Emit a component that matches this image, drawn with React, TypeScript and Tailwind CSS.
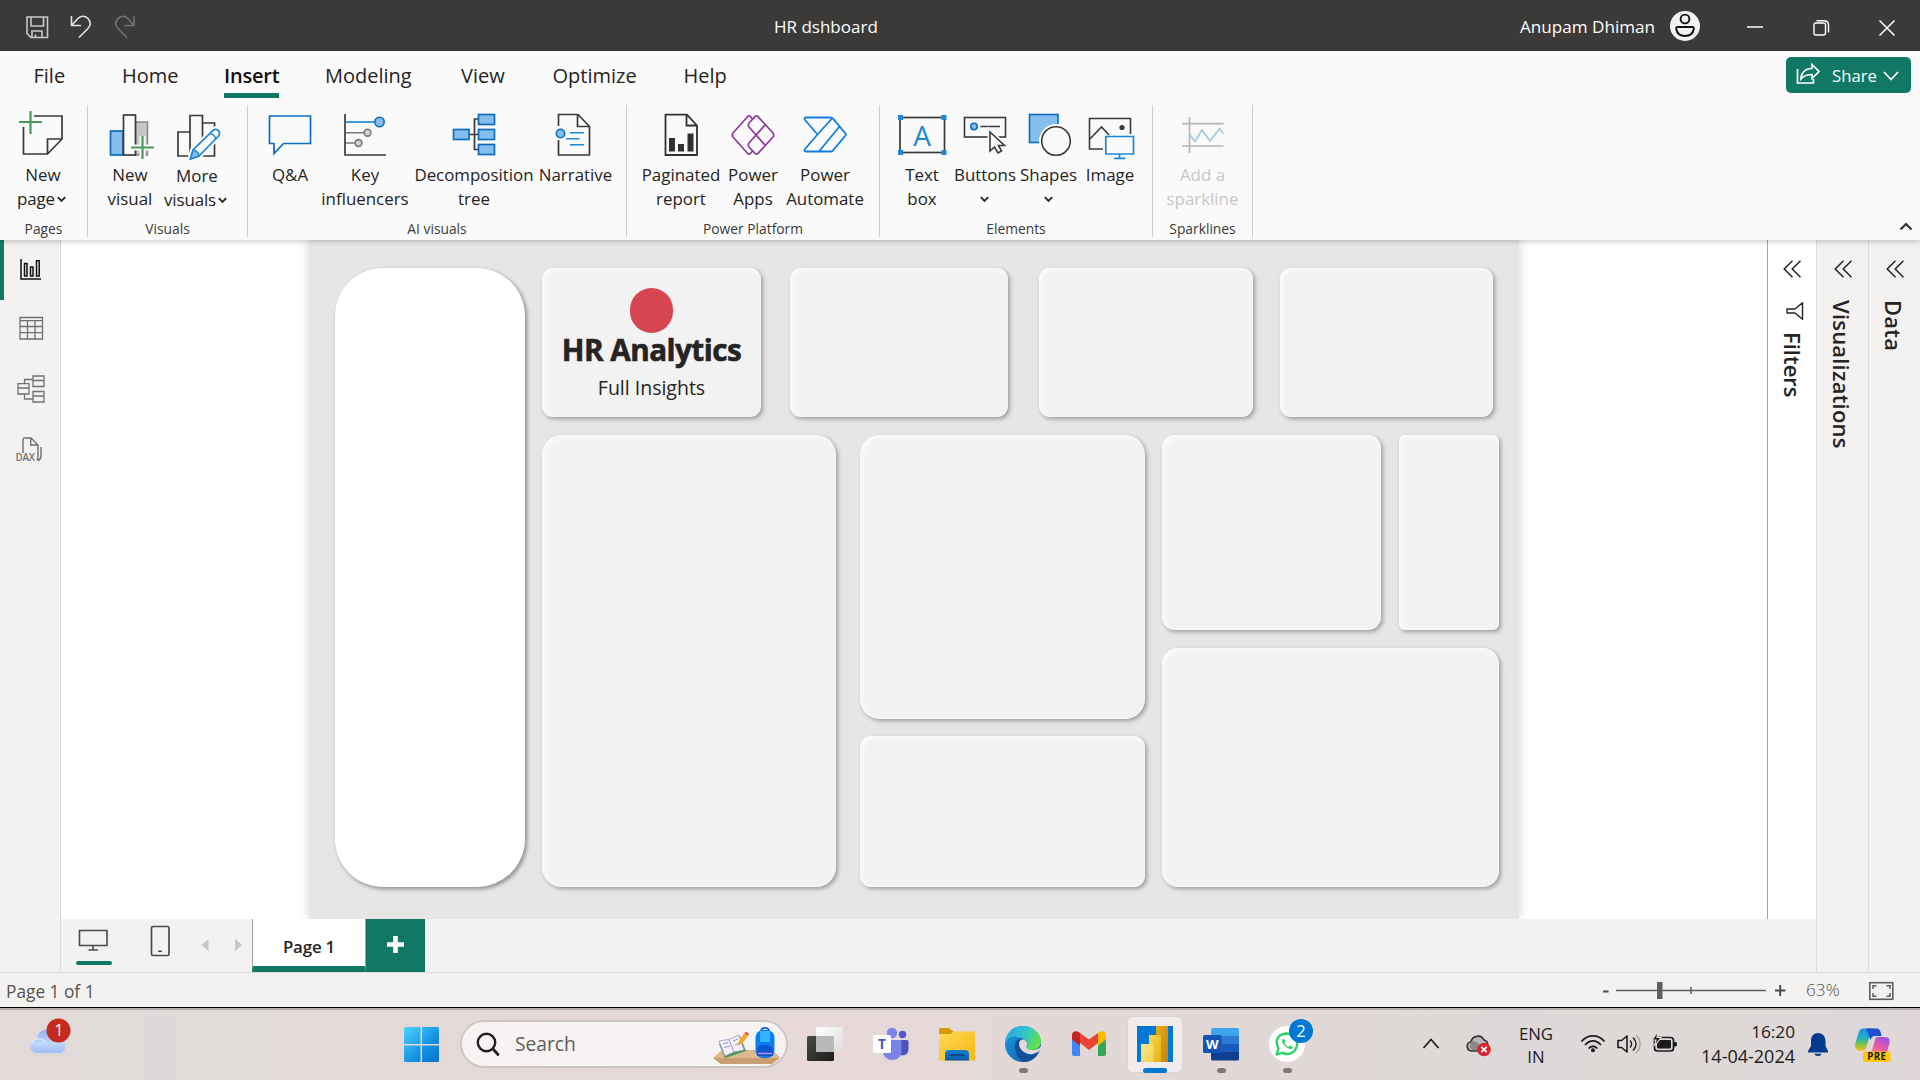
import React from "react";

type Kids = { children?: React.ReactNode };

/* Vector drawing whose coordinates share the window's coordinate space. */
function Ico({ x, y, w, h, className = "", children }: Kids & { x: number; y: number; w: number; h: number; className?: string }) {
  return (
    <svg width={w} height={h} viewBox={`${x} ${y} ${w} ${h}`} fill="none" className={"shrink-0 " + className}>
      {children}
    </svg>
  );
}

const INK = "#3b3a39";
const BLUE = "#1b87d6";
const FILL = "#83beec";

function Chevron({ className = "" }: { className?: string }) {
  return (
    <svg width="9" height="7" viewBox="0 0 9 7" fill="none" className={"inline-block " + className}>
      <path d="M.8 1.2 4.5 5 8.2 1.2" stroke="#252423" strokeWidth="1.8" />
    </svg>
  );
}

/* ---------- title bar ---------- */
function TitleBar() {
  return (
    <header className="flex h-[51px] shrink-0 items-start bg-[#3b3a38] text-white">
      <Ico x={0} y={0} w={160} h={51}>
        <path d="M27 17H47.500V37.500H31L27 33.500Z M31 17V26H43.500V17 M32 37.500V31H42V37.500 M35.500 37V34.500" stroke="#c9c9c7" strokeWidth="1.6" />
        <path d="M71.500 16V25.500H81 M72 25L78 18.500C81 15.600 85 15.800 88 18.500C91 22 90.800 25.500 88 28.500L79 37.500" stroke="#e4e4e2" strokeWidth="1.6" />
        <path d="M134 16V25.500H124.500 M133.500 25L128 18.500C125 15.600 121 15.800 118 18.500C115 22 115.200 25.500 118 28.500L127 37.500" stroke="#74736f" strokeWidth="1.6" />
      </Ico>
      <div className="ml-[614px] w-[110px] pt-[15px] text-[17px] leading-6">HR dshboard</div>
      <div className="ml-[636px] w-[150px] pt-[15px] text-[17.100px] leading-6 whitespace-nowrap">Anupam Dhiman</div>
      <Ico x={1670} y={0} w={250} h={51}>
        <circle cx="1685" cy="26" r="15" fill="#f3f2f1" />
        <circle cx="1685" cy="19" r="4.400" stroke="#111" strokeWidth="1.900" />
        <path d="M1677.500 27H1692.500Q1694 27 1693.800 29C1693 33.500 1689.500 36 1685 36S1677 33.500 1676.200 29Q1676 27 1677.500 27Z" stroke="#111" strokeWidth="1.900" />
        <path d="M1747 27H1763" stroke="#fff" strokeWidth="1.500" />
        <rect x="1814" y="23" width="11.500" height="12" rx="2" stroke="#fff" strokeWidth="1.400" />
        <path d="M1816.500 20.700H1824C1827 20.700 1828.500 22.500 1828.500 25V32.500" stroke="#fff" strokeWidth="1.400" />
        <path d="M1879.500 20.500 1894.500 35.500M1894.500 20.500 1879.500 35.500" stroke="#fff" strokeWidth="1.500" />
      </Ico>
    </header>
  );
}

/* ---------- ribbon ---------- */
function Tabs() {
  const t = "shrink-0 pt-[11px] leading-[28px]";
  return (
    <div className="flex h-[54px] pl-[33.500px] text-[20px] text-[#252423]">
      <div className={t + " w-[88.500px]"}>File</div>
      <div className={t + " w-[102px]"}>Home</div>
      <div className="w-[101px] shrink-0">
        <div className="h-[47px] w-[55px] border-b-[5px] border-[#117865] pt-[11px] text-center leading-[28px] font-semibold tracking-[-0.200px] text-[#11100f]">Insert</div>
      </div>
      <div className={t + " w-[136px]"}>Modeling</div>
      <div className={t + " w-[91.500px]"}>View</div>
      <div className={t + " w-[131px]"}>Optimize</div>
      <div className={t}>Help</div>
      <div className="mt-[6px] mr-[9px] ml-auto flex h-[36px] w-[125px] rounded-[5px] bg-[#117865] text-white">
        <Ico x={1786} y={57} w={46} h={36}>
          <path d="M1797.500 69V83H1813.500V79" stroke="#fff" strokeWidth="1.700" />
          <path d="M1801 79C1801 73 1805 68.500 1812 68.500V64.500L1819 71.500L1812 78.500V74.500C1807 74.500 1803.500 76 1801 79Z" stroke="#fff" strokeWidth="1.700" />
        </Ico>
        <span className="w-[51px] pt-[7px] text-[16.7px] leading-6">Share</span>
        <Ico x={1883} y={57} w={16} h={36}>
          <path d="M1884 72 1891 79.500 1898 72" stroke="#fff" strokeWidth="1.700" />
        </Ico>
      </div>
    </div>
  );
}

function Item({ cx, width, label, sub, drop, dim, down, children }: Kids & { cx: number; width: string; label: string; sub?: string; drop?: boolean; dim?: boolean; down?: boolean }) {
  return (
    <div className={"flex shrink-0 flex-col items-center pt-[3px] " + width}>
      <Ico x={cx - 30} y={108} w={60} h={54}>{children}</Ico>
      <div className={"text-center text-[16.9px] leading-6 whitespace-nowrap " + (dim ? "text-[#c8c6c4] " : "text-[#252423] ") + (down ? "pt-[2px]" : "pt-px")}>
        {label}
        <div className={sub && drop ? "-ml-[3px] tracking-[-0.100px]" : ""}>
          {sub}
          {drop && <Chevron className={sub ? "ml-[2px] align-[2px]" : "align-[2px]"} />}
        </div>
      </div>
    </div>
  );
}

function Group({ name, width, children }: Kids & { name: string; width: string }) {
  return (
    <section className={"flex h-[132px] shrink-0 flex-col border-r border-[#d0cecc] " + width}>
      <div className="flex h-[115px] shrink-0">{children}</div>
      <div className="shrink-0 text-center text-[13.8px] leading-[18px] text-[#3b3a39]">{name}</div>
    </section>
  );
}

function Ribbon() {
  return (
    <div className="relative z-10 h-[189px] shrink-0 bg-[#fafafa] shadow-[0_1px_6px_rgba(0,0,0,0.25)]">
      <Tabs />
      <div className="flex h-[135px]">
        <Group name="Pages" width="w-[88px]">
          <Item cx={43} width="w-[86px]" label="New" sub="page" drop>
            <path d="M34 116H62V139L47.500 154H23.500V127M47.500 154V139H62" stroke={INK} strokeWidth="1.700" />
            <path d="M19 122H42M30.500 111V134" stroke="#459b57" strokeWidth="2.200" />
          </Item>
        </Group>
        <Group name="Visuals" width="w-[160px]">
          <div className="w-[12px]" />
          <Item cx={130} width="w-[60px]" label="New" sub="visual">
            <rect x="135.500" y="122" width="12" height="33" fill="#c8c6c4" stroke="#8a8886" strokeWidth="1.500" />
            <rect x="110.500" y="131" width="12.500" height="24" fill={FILL} stroke="#0f6cbd" strokeWidth="1.700" />
            <rect x="123.500" y="115" width="12" height="40" fill="#fafafa" stroke={INK} strokeWidth="1.700" />
            <path d="M130 147.500H155M142.500 136V160" stroke="#fafafa" strokeWidth="6" />
            <path d="M131 147.500H154M142.500 136V159" stroke="#459b57" strokeWidth="2.200" />
          </Item>
          <Item cx={197} width="w-[74px]" label="More" sub="visuals" drop down>
            <path d="M178 132H190V156H178ZM190 156V115.500H202.500V156ZM202.500 123H214.500V156H202.500" stroke={INK} strokeWidth="1.700" />
            <path d="M190.500 159 193 150 213 130.500C217 127.500 221.500 132 218.500 136L199 156Z" fill="#fafafa" stroke="#fafafa" strokeWidth="6" />
            <path d="M190.500 159 193 150 213 130.500C217 127.500 221.500 132 218.500 136L199 156Z" fill="#fafafa" stroke={BLUE} strokeWidth="1.700" />
            <path d="M190.500 159 193 150C196 150.500 198.500 152.500 199 156Z" fill={FILL} stroke={BLUE} strokeWidth="1.500" />
            <path d="M210 133.500C213 134 215 136 215.500 139" stroke={BLUE} strokeWidth="1.500" />
          </Item>
        </Group>
        <Group name="AI visuals" width="w-[379px]">
          <div className="w-[14px]" />
          <Item cx={290} width="w-[56px]" label="Q&A">
            <path d="M269.500 116H310.500V143.500H283.500L274 153.500V143.500H269.500Z" stroke="#0f6cbd" strokeWidth="1.700" />
          </Item>
          <Item cx={365} width="w-[94px]" label="Key" sub="influencers">
            <path d="M345 114V155H386" stroke={INK} strokeWidth="1.700" />
            <path d="M346 122H374" stroke={BLUE} strokeWidth="1.700" />
            <circle cx="379.500" cy="122" r="4.700" fill={FILL} stroke="#0f6cbd" strokeWidth="1.600" />
            <path d="M346 132.700H364M346 143H355" stroke="#797775" strokeWidth="1.600" />
            <circle cx="367.500" cy="132.700" r="3.400" fill="#d2d0ce" stroke="#797775" strokeWidth="1.600" />
            <circle cx="358.500" cy="143" r="3.400" fill="#d2d0ce" stroke="#797775" strokeWidth="1.600" />
          </Item>
          <Item cx={474} width="w-[124px]" label="Decomposition" sub="tree">
            <path d="M479 119H474.500V149.500H479M469 134.500H479" stroke={INK} strokeWidth="1.700" />
            <g fill={FILL} stroke="#0f6cbd" strokeWidth="1.700">
              <rect x="453.500" y="129.500" width="15.500" height="10" />
              <rect x="478.500" y="114.500" width="16" height="10" />
              <rect x="478.500" y="129.500" width="16" height="10" />
              <rect x="478.500" y="144.500" width="16" height="10" />
            </g>
          </Item>
          <Item cx={576} width="w-[79px]" label="Narrative">
            <path d="M558.500 126V114.500H578L589.500 126.500V155H558.500V140M577.500 115V126.500H589" stroke={INK} strokeWidth="1.700" />
            <circle cx="560.500" cy="133.500" r="4.200" fill={FILL} stroke="#0f6cbd" strokeWidth="1.600" />
            <path d="M570 132.700H584M566 138.700H579.500M570 144.700H584" stroke={BLUE} strokeWidth="1.500" />
          </Item>
        </Group>
        <Group name="Power Platform" width="w-[253px]">
          <div className="w-[14px]" />
          <Item cx={681} width="w-[80px]" label="Paginated" sub="report">
            <path d="M665.500 114.700H687L697 125.500V155H665.500ZM686.500 115V125.500H697" stroke="#323130" strokeWidth="1.800" />
            <path d="M669 138H675V151.500H669ZM678 144H684V151.500H678ZM687.500 133.500H693.500V151.500H687.500Z" fill="#323130" />
          </Item>
          <Item cx={753} width="w-[64px]" label="Power" sub="Apps">
            <g stroke="#8f3a9c" strokeWidth="1.700" strokeLinejoin="round">
              <path d="M753 119.500 750.500 116.700Q749 115.200 747.500 116.700L733 133Q731.500 135 733 137L747.500 153.300Q749 154.800 750.500 153.300L753 150.500" />
              <path d="M755 116.700Q756.500 115.200 758 116.700L773 133Q774.500 135 773 137L758 153.300Q756.500 154.800 755 153.300L749 147Q747.500 145 749 143L765 125M755 116.700L749 123Q747.500 125 749 127L765 145" />
            </g>
          </Item>
          <Item cx={825} width="w-[80px]" label="Power" sub="Automate">
            <path d="M806 117.500H830.500Q832 117.500 833 118.700L845.500 133.500Q846.200 134.500 845.500 135.500L833 150.300Q832 151.500 830.500 151.500H806Q803.500 151 805 149L817.500 134.500L805 120Q803.500 118 806 117.500ZM832 118.500 817.500 134.500M839.500 126.500 819 151.500" stroke="#0f7fe0" strokeWidth="1.800" strokeLinejoin="round" />
          </Item>
        </Group>
        <Group name="Elements" width="w-[273px]">
          <div className="w-[12px]" />
          <Item cx={922} width="w-[60px]" label="Text" sub="box">
            <rect x="900" y="117.500" width="44.500" height="35" stroke={INK} strokeWidth="1.700" />
            <path d="M898 115H903V120H898ZM941.500 115H946.500V120H941.500ZM898 150H903V155H898ZM941.500 150H946.500V155H941.500Z" fill={BLUE} />
            <text x="922" y="145.500" textAnchor="middle" fontSize="28" fill={BLUE} fontFamily="Open Sans" fontWeight="400">A</text>
          </Item>
          <Item cx={985} width="w-[66px]" label="Buttons" drop>
            <rect x="964.500" y="117.500" width="41" height="19.500" stroke={INK} strokeWidth="1.600" />
            <circle cx="974" cy="126.500" r="3.200" fill={FILL} stroke="#0f6cbd" strokeWidth="1.600" />
            <path d="M980.500 126.500H1000" stroke={INK} strokeWidth="1.500" />
            <path d="M990 132V151L994.500 147L998 153L1001.500 151L998.500 145.500H1004.500Z" fill="#fafafa" stroke="#fafafa" strokeWidth="5" />
            <path d="M990 132V151L994.500 147L998 153L1001.500 151L998.500 145.500H1004.500Z" fill="#fafafa" stroke={INK} strokeWidth="1.600" />
          </Item>
          <Item cx={1048} width="w-[61px]" label="Shapes" drop>
            <rect x="1028.500" y="114.500" width="28.500" height="28" fill={FILL} stroke="#0f6cbd" strokeWidth="1.600" />
            <circle cx="1055" cy="141" r="17" fill="#fafafa" />
            <circle cx="1055" cy="141" r="14.300" fill="#fafafa" stroke={INK} strokeWidth="1.600" />
          </Item>
          <Item cx={1110} width="w-[62px]" label="Image">
            <path d="M1103 149H1089.500V118.500H1130.500V134M1090 139 1101.500 127 1109 135" stroke={INK} strokeWidth="1.600" />
            <circle cx="1122" cy="127.500" r="2.600" fill={INK} />
            <path d="M1105.800 136.500H1133.500V154H1105.800ZM1119.500 154V158M1114 158.300H1125.500" stroke={BLUE} strokeWidth="1.700" />
          </Item>
        </Group>
        <Group name="Sparklines" width="w-[100px]">
          <Item cx={1202} width="w-[99px]" label="Add a" sub="sparkline" dim>
            <path d="M1188.500 117V153M1181 123.700H1222.500M1181 146H1222.500" stroke="#b7b5b3" strokeWidth="1.700" />
            <path d="M1189 135 1194 141.500 1201 130 1209 141 1218.500 128.700 1222.500 134" stroke="#a5cbe4" strokeWidth="1.700" />
          </Item>
        </Group>
        <Ico x={1899} y={105} w={14} h={130} className="mr-[7px] ml-auto">
          <path d="M1900.500 229.500 1906 224 1911.500 229.500" stroke="#323130" strokeWidth="2.200" />
        </Ico>
      </div>
    </div>
  );
}

/* ---------- left rail ---------- */
function Rail() {
  return (
    <nav className="flex w-[61px] shrink-0 flex-col border-r border-[#dddbd9] bg-[#f3f2f1]">
      <div className="h-[60px] border-l-4 border-[#117865]">
        <Ico x={4} y={240} w={56} h={60}>
          <path d="M21 259V279H41M24.500 263.500H27V276H24.500ZM30.500 267H33V276H30.500ZM36.500 260.700H39.200V276H36.500Z" stroke="#111" strokeWidth="1.500" />
        </Ico>
      </div>
      <Ico x={0} y={300} w={60} h={60}>
        <path d="M20 317.500H42.500V339H20ZM20 320.700H42.500M20 326.500H42.500M20 332.700H42.500M27.500 321V339M35 321V339" stroke="#72706e" strokeWidth="1.300" />
      </Ico>
      <Ico x={0} y={360} w={60} h={60}>
        <path d="M18 383.700H29V394H18ZM18 388H29M33 376H44V386.500H33ZM33 380.500H44M33 391.500H44V402H33ZM33 396H44M24.500 383V379.500H33M24.500 394V399H33" stroke="#72706e" strokeWidth="1.300" />
      </Ico>
      <Ico x={0} y={420} w={60} h={60}>
        <path d="M23 453V439.500Q23 438 24.500 438H31L38 445V456Q38 459 37 460M30.700 438V445H38M41 447V456Q41 459.500 38 460.500" stroke="#72706e" strokeWidth="1.400" />
        <text x="15.500" y="460.700" fontSize="9.800" fontWeight="600" fill="#72706e" fontFamily="Open Sans" letterSpacing="-0.200">DAX</text>
      </Ico>
    </nav>
  );
}

/* ---------- report canvas ---------- */
const CARD = "shrink-0 bg-[#f2f2f2] shadow-[2px_2px_4px_rgba(0,0,0,0.32),inset_2px_2px_6px_rgba(255,255,255,0.85)] ";

function Canvas() {
  return (
    <main className="flex min-w-0 flex-1 overflow-hidden bg-white pl-[248px]">
      <div className="flex w-[1210px] shrink-0 gap-[17px] bg-[#e6e6e6] pt-[28px] pl-[26px] shadow-[0_0_10px_rgba(0,0,0,0.16)]">
        <div className="h-[619px] w-[190px] shrink-0 rounded-[48px] bg-white shadow-[2px_2px_4px_rgba(0,0,0,0.4)]" />
        <div className="flex flex-col gap-[18px]">
          <div className="flex h-[149px]">
            <div className={CARD + "flex w-[219px] flex-col items-center rounded-[11px] pt-[20px]"}>
              <div className="h-[45px] w-[43px] rounded-full bg-[#d64550]" />
              <div className="text-[29.700px] leading-[34px] font-bold tracking-[-0.550px] whitespace-nowrap text-[#252423] [-webkit-text-stroke:0.600px_#252423]">HR Analytics</div>
              <div className="pt-[4px] text-[19.500px] leading-[34px] text-[#252423]">Full Insights</div>
            </div>
            <div className={CARD + "ml-[29px] w-[218px] rounded-[11px]"} />
            <div className={CARD + "ml-[31px] w-[214px] rounded-[11px]"} />
            <div className={CARD + "ml-[27px] w-[213px] rounded-[11px]"} />
          </div>
          <div className="flex h-[452px]">
            <div className={CARD + "w-[294px] rounded-[20px]"} />
            <div className="ml-[24px] flex w-[285px] flex-col gap-[17px]">
              <div className={CARD + "h-[284px] rounded-[20px]"} />
              <div className={CARD + "h-[151px] rounded-[11px]"} />
            </div>
            <div className="ml-[17px] flex w-[337px] flex-col gap-[18px]">
              <div className="flex h-[195px] justify-between">
                <div className={CARD + "w-[219px] rounded-[13px]"} />
                <div className={CARD + "w-[100px] rounded-[6px]"} />
              </div>
              <div className={CARD + "h-[239px] rounded-[16px]"} />
            </div>
          </div>
        </div>
      </div>
    </main>
  );
}

/* ---------- collapsed panes ---------- */
function Pane({ name, className, icon }: { name: string; className: string; icon?: boolean }) {
  return (
    <div className={"flex shrink-0 flex-col " + className}>
      <svg width="18" height="18" viewBox="0 0 18 18" fill="none" className="mt-[20px] shrink-0">
        <path d="M9.500.7 1.200 9 9.500 17.300M17.500.7 9.200 9 17.500 17.300" stroke="#252423" strokeWidth="1.500" />
      </svg>
      {icon && (
        <svg width="18" height="18" viewBox="0 0 18 18" fill="none" className="mt-[24px] ml-[3px] shrink-0">
          <path d="M16.500.8V17.200L9 11H1V7H9Z" stroke="#252423" strokeWidth="1.400" strokeLinejoin="round" />
        </svg>
      )}
      <div className={"w-[22px] text-[22px] leading-[22px] font-semibold whitespace-nowrap text-[#252423] [writing-mode:vertical-rl] " + (icon ? "-ml-px mt-[12px]" : "-ml-[3px] mt-[22px] tracking-[0.200px]")}>{name}</div>
    </div>
  );
}

/* ---------- page tabs and status ---------- */
function PageTabs() {
  return (
    <div className="flex h-[53px] shrink-0 bg-[#f3f2f1]">
      <Ico x={61} y={919} w={191} h={53}>
        <path d="M79.500 930.500H107V945.500H79.500ZM93 946V949.500M88.500 950H98" stroke="#4b4a48" strokeWidth="1.600" />
        <rect x="76" y="961" width="36" height="4" rx="2" fill="#117865" />
        <rect x="151.500" y="926.500" width="17.500" height="29" rx="1.500" stroke="#4b4a48" strokeWidth="1.700" />
        <path d="M158 951.300H162" stroke="#4b4a48" strokeWidth="1.500" />
        <path d="M208.500 939V951L201.500 945ZM235 939V951L242 945Z" fill="#c8c6c4" />
      </Ico>
      <div className="w-[114px] border-r border-b-[6px] border-l border-[#a19f9d] border-b-[#117865] bg-white pt-[16px] text-center text-[16.900px] leading-6 font-semibold tracking-[-0.200px] text-[#252423]">Page 1</div>
      <div className="flex w-[59px] items-center justify-center bg-[#117865]">
        <svg width="17" height="17" viewBox="0 0 17 17" className="-mt-[3px]"><path d="M0 8.500H17M8.500 0V17" stroke="#fff" strokeWidth="4.600" /></svg>
      </div>
    </div>
  );
}

function Status() {
  return (
    <div className="flex h-[36px] shrink-0 border-t border-b border-t-[#dddbd9] border-b-black bg-[#f3f2f1] text-[#55534f]">
      <div className="pt-[7px] pl-[6px] text-[17.300px] leading-6">Page 1 of 1</div>
      <Ico x={1595} y={973} w={211} h={34} className="ml-auto">
        <path d="M1603 991.500H1608.500M1775 990.500H1785.500M1780.200 985V996" stroke="#4b4a48" strokeWidth="1.900" />
        <path d="M1616 990.500H1766M1691 987V994" stroke="#605e5c" strokeWidth="1.500" />
        <rect x="1657" y="982" width="5.500" height="17" fill="#605e5c" />
      </Ico>
      <div className="w-[59px] pt-[5px] text-[17.300px] leading-6 font-light">63%</div>
      <Ico x={1865} y={973} w={55} h={34}>
        <rect x="1869.800" y="982.700" width="23" height="16.600" stroke="#605e5c" strokeWidth="1.600" />
        <path d="M1876.500 985.800H1873V989M1873 993V996.300H1876.500M1886.500 985.800H1890V989M1890 993V996.300H1886.500" stroke="#605e5c" strokeWidth="1.500" />
      </Ico>
    </div>
  );
}

/* ---------- taskbar ---------- */
function TaskIcon({ x, children, className = "" }: Kids & { x: number; className?: string }) {
  return <Ico x={x} y={1010} w={66} h={70} className={className}>{children}</Ico>;
}

function Taskbar() {
  return (
    <footer className="flex h-[72px] shrink-0 border-t-2 border-[#b5adac] bg-[linear-gradient(90deg,#e2d9d8_0%,#dfdad9_8%,#e3d9d7_25%,#e6d8d6_45%,#e2d8d6_60%,#ded9d8_78%,#e0d8d8_100%)] text-[#1b1b1b]">
      <Ico x={0} y={1010} w={460} h={70}>
        <defs>
          <linearGradient id="cloud" x1="0" y1="0" x2="0" y2="1"><stop stopColor="#8fb2f5" /><stop offset="0.600" stopColor="#bfd6fb" /><stop offset="1" stopColor="#9dbcf6" /></linearGradient>
          <linearGradient id="win" x1="0" y1="0" x2="1" y2="1"><stop stopColor="#4fd4fb" /><stop offset="0.600" stopColor="#1490e2" /><stop offset="1" stopColor="#0673cf" /></linearGradient>
        </defs>
        <path d="M37 1053C28 1053 28 1040 37 1039.500C37 1027 56 1026 58 1038C68 1037 69 1053 58 1053Z" fill="url(#cloud)" />
        <path d="M31.500 1043C35 1037 43 1038 46 1043" stroke="#e5effe" strokeWidth="1.500" opacity="0.700" />
        <circle cx="58.500" cy="1030.500" r="12" fill="#c42b1c" />
        <text x="59" y="1036.300" textAnchor="middle" fontSize="16.500" fill="#fff" fontFamily="Open Sans">1</text>
        <path d="M405.500 1027H420.500V1044H404V1028.500Q404 1027 405.500 1027ZM422 1027H437.500Q439 1027 439 1028.500V1044H422ZM404 1045.500H420.500V1062H405.500Q404 1062 404 1060.500ZM422 1045.500H439V1060.500Q439 1062 437.500 1062H422Z" fill="url(#win)" />
      </Ico>
      <div className="mt-[10px] flex h-[48px] w-[328px] shrink-0 rounded-full border-2 border-[#cfc5c4] bg-[#f7f3f2]">
        <Ico x={462} y={1022} w={53} h={44}>
          <circle cx="486.500" cy="1042.500" r="8.700" stroke="#1f1f1f" strokeWidth="2.400" />
          <path d="M493 1049 498 1054.500" stroke="#1f1f1f" strokeWidth="2.800" strokeLinecap="round" />
        </Ico>
        <span className="w-[196px] pt-[10px] text-[19.200px] leading-[24px] text-[#5f5d5b]">Search</span>
        <Ico x={711} y={1022} w={72} h={44}>
          <path d="M713 1058 722 1050H772L780 1057L772 1064H721Z" fill="#dbb98d" />
          <path d="M713 1058H780L772 1064H721Z" fill="#c79f70" />
          <path d="M719 1044 740 1036 746 1051 725 1058Z" fill="#3f9a58" />
          <path d="M719 1041 729 1039.500 739 1035 744 1050 734 1052 725 1056Z" fill="#f4effb" stroke="#9a93b8" strokeWidth="0.800" />
          <path d="M729 1040 734 1052M723 1044 728 1042.500M724 1047.500 730 1046M733 1041 738 1039M735 1045 740 1043" stroke="#8f89b0" strokeWidth="0.900" />
          <path d="M738 1045.500 739 1041 744.500 1033 748 1036 742 1043.500Z" fill="#f6a623" />
          <path d="M744.500 1033 746 1031.500 749 1034 748 1036Z" fill="#e0544b" />
          <path d="M761 1032C761 1026.500 769 1026.500 769 1032" stroke="#0a63d6" strokeWidth="1.800" />
          <rect x="755.500" y="1030" width="19" height="28" rx="7.500" fill="#0a7df0" />
          <path d="M760 1031H770V1042H760Z" fill="#33b2ff" />
          <path d="M757 1050C757 1043 773 1043 773 1050V1056H757Z" fill="#0b55cf" />
          <path d="M758 1053.500H772" stroke="#c48cff" strokeWidth="1.500" />
        </Ico>
      </div>
      <div className="w-[4px] shrink-0" />
      <TaskIcon x={792}>
        <defs>
          <linearGradient id="tvd" x1="0" y1="0" x2="1" y2="1"><stop stopColor="#494947" /><stop offset="1" stopColor="#1c1c1b" /></linearGradient>
          <linearGradient id="tvl" x1="0" y1="0" x2="1" y2="1"><stop stopColor="#fff" /><stop offset="1" stopColor="#dcdcdc" /></linearGradient>
        </defs>
        <rect x="807" y="1036" width="27" height="25" rx="1.500" fill="url(#tvd)" />
        <rect x="816" y="1027" width="27" height="25" rx="1.500" fill="url(#tvl)" />
        <path d="M816 1036H834V1052H817.500Q816 1052 816 1050.500Z" fill="#b9b9b8" />
      </TaskIcon>
      <TaskIcon x={858}>
        <circle cx="892" cy="1033" r="5.200" fill="#7b83eb" />
        <circle cx="902.500" cy="1034.500" r="3.700" fill="#5059c9" />
        <path d="M899 1040H907Q908.500 1040 908.500 1041.500V1049C908.500 1054.500 904.500 1056 900 1055Z" fill="#4b53bc" />
        <path d="M883 1040H900Q901.500 1040 901.500 1041.500V1051C901.500 1063 883 1063 883 1051Z" fill="#7b83eb" />
        <rect x="873" y="1035" width="18" height="18" rx="1.500" fill="#fff" />
        <text x="882" y="1049" textAnchor="middle" fontSize="13.500" fontWeight="700" fill="#4b53bc" fontFamily="Open Sans">T</text>
      </TaskIcon>
      <TaskIcon x={924}>
        <defs>
          <linearGradient id="fol" x1="0" y1="0" x2="1" y2="1"><stop stopColor="#ffd85a" /><stop offset="1" stopColor="#f7b70e" /></linearGradient>
          <linearGradient id="folb" x1="0" y1="0" x2="0" y2="1"><stop stopColor="#157fd0" /><stop offset="1" stopColor="#0a5aa8" /></linearGradient>
        </defs>
        <path d="M939 1029.500Q939 1028 940.500 1028H949L954 1032V1037H939Z" fill="#d99a06" />
        <path d="M939 1034H950L954 1031.500H973.500Q975 1031.500 975 1033V1059Q975 1060.500 973.500 1060.500H940.500Q939 1060.500 939 1059Z" fill="url(#fol)" />
        <path d="M945 1060.500V1054Q945 1050 949 1050H965Q969 1050 969 1054V1060.500Z" fill="url(#folb)" />
        <path d="M949.500 1055H964.500" stroke="#0a4a86" strokeWidth="2" />
      </TaskIcon>
      <TaskIcon x={990}>
        <defs>
          <linearGradient id="eg1" x1="0" y1="0" x2="1" y2="0.400"><stop stopColor="#2aa5e0" /><stop offset="0.550" stopColor="#2fc3d0" /><stop offset="1" stopColor="#5fe04e" /></linearGradient>
          <linearGradient id="eg2" x1="0" y1="0" x2="1" y2="1"><stop stopColor="#1b9de2" /><stop offset="1" stopColor="#0c59a4" /></linearGradient>
        </defs>
        <circle cx="1023" cy="1044" r="18" fill="url(#eg2)" />
        <path d="M1005.200 1042C1007 1031 1014 1026 1023 1026C1034 1026 1041 1034 1041 1041C1041 1047 1037 1050 1032 1050C1027 1050 1025 1048.500 1027 1046.500C1028.500 1044 1027 1039.500 1022 1038C1014 1035 1008 1037 1005.200 1042Z" fill="url(#eg1)" />
        <path d="M1015 1049C1013.500 1041 1019 1038 1023 1038.500C1018 1041 1018.500 1049 1024 1052.500C1029 1056 1034 1055 1038.500 1052.500C1036 1058 1031 1062 1024 1062C1019 1060 1016 1055 1015 1049Z" fill="#124f99" />
        <path d="M1019 1044C1019 1050 1026 1055 1033 1054L1039 1051.500L1042 1046L1038 1049C1032 1051.500 1025.500 1049.500 1026.500 1046.500C1028.500 1043 1026 1040 1023 1039.500C1020.500 1039.500 1019 1041.500 1019 1044Z" fill="#e6d8d6" />
        <rect x="1019" y="1068" width="9" height="5" rx="2.500" fill="#827878" />
      </TaskIcon>
      <TaskIcon x={1056}>
        <path d="M1072 1036V1054Q1072 1056 1074 1056H1080V1040Z" fill="#4285f4" />
        <path d="M1106 1036V1054Q1106 1056 1104 1056H1098V1040Z" fill="#34a853" />
        <path d="M1098 1033V1045.500L1106 1039.500V1035C1106 1031 1101.500 1030 1098 1033Z" fill="#fbbc04" />
        <path d="M1080 1033V1045.500L1072 1039.500V1035C1072 1031 1076.500 1030 1080 1033Z" fill="#c5221f" />
        <path d="M1080 1033 1089 1039.500 1098 1033V1043L1089 1050 1080 1043Z" fill="#ea4335" />
      </TaskIcon>
      <div className="flex w-[66px] shrink-0 justify-center">
        <div className="mt-[6px] h-[57px] w-[56px] rounded-[6px] border border-[#dcd2d1] bg-[#f3ecec]">
          <Ico x={1128} y={1017} w={54} h={56}>
            <defs>
              <linearGradient id="pb1" x1="0" y1="0" x2="1" y2="1"><stop stopColor="#e8ad0d" /><stop offset="1" stopColor="#c28213" /></linearGradient>
              <linearGradient id="pb2" x1="0" y1="0" x2="1" y2="1"><stop stopColor="#f8d74d" /><stop offset="1" stopColor="#e6b013" /></linearGradient>
              <linearGradient id="pb3" x1="0" y1="0" x2="1" y2="1"><stop stopColor="#fbe98f" /><stop offset="1" stopColor="#f1cf4d" /></linearGradient>
            </defs>
            <rect x="1137" y="1026" width="36" height="36" fill="#0078d4" />
            <path d="M1156 1026H1168V1062H1156Z" fill="url(#pb1)" />
            <path d="M1149 1035H1161V1062H1149Z" fill="url(#pb2)" />
            <path d="M1141 1044H1153.500V1062H1141Z" fill="url(#pb3)" />
            <rect x="1143" y="1068" width="24" height="5" rx="2.500" fill="#0078d4" />
          </Ico>
        </div>
      </div>
      <TaskIcon x={1188}>
        <path d="M1211 1029.500Q1211 1028 1212.500 1028H1237.500Q1239 1028 1239 1029.500V1036H1211Z" fill="#41a5ee" />
        <path d="M1211 1036H1239V1044H1211Z" fill="#2b7cd3" />
        <path d="M1211 1044H1239V1052H1211Z" fill="#185abd" />
        <path d="M1211 1052H1239V1059Q1239 1060.500 1237.500 1060.500H1212.500Q1211 1060.500 1211 1059Z" fill="#103f91" />
        <rect x="1203" y="1035" width="18.500" height="18" rx="1.500" fill="#1554b5" />
        <text x="1212.200" y="1048.800" textAnchor="middle" fontSize="13" fontWeight="700" fill="#fff" fontFamily="Open Sans">W</text>
        <rect x="1217" y="1068" width="9" height="5" rx="2.500" fill="#827878" />
      </TaskIcon>
      <TaskIcon x={1254}>
        <circle cx="1287" cy="1044" r="18" fill="#fff" />
        <path d="M1276.500 1054.500 1278.500 1048.500C1273 1038 1281 1033.500 1287 1033.500C1301 1035 1300 1054 1287 1054C1285 1054 1284 1053.500 1282.500 1052.800Z" stroke="#25d366" strokeWidth="2.300" strokeLinejoin="round" />
        <path d="M1283.500 1038.500C1281 1040 1282 1043 1285 1046C1288.500 1049.500 1291.500 1050 1293 1047.500L1290 1045.500L1288.500 1047C1286.500 1046 1285.500 1045 1284.500 1043L1285.500 1041.500Z" fill="#25d366" />
        <circle cx="1301" cy="1031" r="12" fill="#0078d4" />
        <text x="1301" y="1036.800" textAnchor="middle" fontSize="16.500" fill="#fff" fontFamily="Open Sans">2</text>
        <rect x="1283" y="1068" width="9" height="5" rx="2.500" fill="#827878" />
      </TaskIcon>
      <Ico x={1410} y={1010} w={100} h={70} className="ml-[90px]">
        <path d="M1423.500 1048 1431 1039.500 1438.500 1048" stroke="#1b1b1b" strokeWidth="1.700" />
        <path d="M1471 1051C1466 1050 1466 1042.500 1471 1042C1472 1035.500 1481 1034 1484 1040C1489 1041 1489 1050 1484 1051Z" fill="#b9b9b8" stroke="#333" strokeWidth="1.700" />
        <path d="M1472 1041C1478 1041 1480 1045 1485 1050H1472Q1468 1046 1472 1041Z" fill="#8a8a89" />
        <circle cx="1484" cy="1049.500" r="6.800" fill="#d8262f" />
        <path d="M1481.300 1046.800 1486.700 1052.200M1486.700 1046.800 1481.300 1052.200" stroke="#fff" strokeWidth="1.700" />
      </Ico>
      <div className="w-[52px] pt-[12px] text-center text-[16.800px] leading-[23px]">ENG<br />IN</div>
      <Ico x={1562} y={1010} w={130} h={70}>
        <path d="M1581.500 1041.500C1588 1034 1598 1034 1604.500 1041.500M1585 1045C1590 1039.500 1596 1039.500 1601 1045M1588.500 1048.500C1591.500 1045.500 1594.500 1045.500 1597.500 1048.500" stroke="#1b1b1b" strokeWidth="1.700" />
        <circle cx="1593" cy="1050.300" r="2" fill="#1b1b1b" />
        <path d="M1618 1040.500H1621.500L1627 1036V1052L1621.500 1047.500H1618Z" stroke="#1b1b1b" strokeWidth="1.600" strokeLinejoin="round" />
        <path d="M1630 1040.500C1632 1042.500 1632 1045.500 1630 1047.500M1633 1037.500C1637 1041.500 1637 1046.500 1633 1050.500" stroke="#1b1b1b" strokeWidth="1.500" />
        <path d="M1636 1035C1641.500 1040.500 1641.500 1047.500 1636 1053" stroke="#aaa3a2" strokeWidth="1.400" />
        <rect x="1654.500" y="1037.500" width="19" height="13.500" rx="3" stroke="#1b1b1b" strokeWidth="1.700" />
        <rect x="1657" y="1040" width="14" height="8.500" rx="1" fill="#1b1b1b" />
        <path d="M1674 1042H1676Q1677 1042 1677 1044T1676 1046.500H1674Z" fill="#1b1b1b" />
        <path d="M1658 1031.500 1652 1040H1656L1654.500 1046 1661 1037.500H1657Z" fill="#1b1b1b" stroke="#dfd9d8" strokeWidth="1.200" />
      </Ico>
      <div className="w-[103px] pt-[10px] text-right text-[17.200px] leading-[24px]">16:20<br /><span className="text-[18px]">14-04-2024</span></div>
      <Ico x={1795} y={1010} w={125} h={70}>
        <defs>
          <linearGradient id="cp1" x1="0" y1="0" x2="0" y2="1"><stop stopColor="#1c8fe8" /><stop offset="0.450" stopColor="#27b0b8" /><stop offset="0.700" stopColor="#7fc24a" /><stop offset="1" stopColor="#f6c21c" /></linearGradient>
          <linearGradient id="cp2" x1="0.800" y1="0" x2="0.200" y2="1"><stop stopColor="#9a4fe8" /><stop offset="0.500" stopColor="#e85aa8" /><stop offset="1" stopColor="#ff8a5c" /></linearGradient>
        </defs>
        <path d="M1818 1033C1813 1033 1811 1037 1811 1041V1046L1808 1051V1052.500H1828V1051L1825.500 1046V1041C1825.500 1037 1823 1033 1818 1033ZM1814.500 1053.800H1821.500C1821 1056.700 1815 1056.700 1814.500 1053.800Z" fill="#013a8e" />
        <path d="M1863 1028.500H1875C1871 1030 1871 1033 1870 1036L1866 1048Q1865 1051 1861 1051C1855 1051 1854 1047 1856 1041L1858.500 1033Q1860 1028.500 1863 1028.500Z" fill="url(#cp1)" />
        <path d="M1866 1028.500H1876C1880 1028.500 1880.500 1031 1881.500 1036H1876C1872 1036 1871.500 1037.500 1870.500 1040Z" fill="#1d4fd0" />
        <path d="M1877 1037H1884C1890 1037 1890.500 1040 1889 1045L1886 1055H1866C1871 1055 1872 1050 1873 1047L1875 1040Q1875.800 1037 1877 1037Z" fill="url(#cp2)" />
        <rect x="1863" y="1051.500" width="27.500" height="10.500" rx="2" fill="#ffc60a" />
        <text x="1876.800" y="1060.300" textAnchor="middle" fontSize="9.800" fontWeight="700" fill="#1b1b1b" fontFamily="Open Sans" letterSpacing="0.300">PRE</text>
      </Ico>
    </footer>
  );
}

export default function App() {
  return (
    <div className="flex h-[1080px] w-[1920px] flex-col overflow-hidden bg-white font-['Open_Sans','Noto_Sans',sans-serif]">
      <TitleBar />
      <Ribbon />
      <div className="flex h-[732px] shrink-0">
        <Rail />
        <div className="flex w-[1755px] shrink-0 flex-col">
          <div className="flex h-[679px] shrink-0">
            <Canvas />
            <Pane name="Filters" icon className="w-[49px] border-l border-[#a6a4a2] bg-white pl-[15px]" />
          </div>
          <PageTabs />
        </div>
        <Pane name="Visualizations" className="w-[52px] border-l border-[#dddbd9] bg-[#f3f2f1] pl-[17px]" />
        <Pane name="Data" className="w-[52px] border-l border-[#dddbd9] bg-[#f3f2f1] pl-[17px]" />
      </div>
      <Status />
      <Taskbar />
    </div>
  );
}
